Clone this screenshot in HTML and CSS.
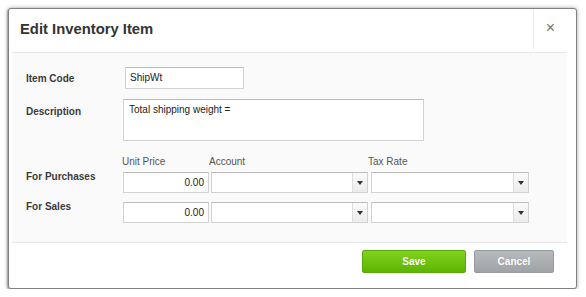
FILE: index.html
```html
<!DOCTYPE html>
<html>
<head>
<meta charset="utf-8">
<link rel="stylesheet" href="styles.css">
</head>
<body>
<div class="dialog">
  <div class="header">
    <h1 class="title">Edit Inventory Item</h1>
    <div class="close">×</div>
  </div>
  <div class="body">
    <div class="row row-code">
      <label class="lbl">Item Code</label>
      <div class="field code">ShipWt</div>
    </div>
    <div class="row row-desc">
      <label class="lbl">Description</label>
      <div class="field desc">Total shipping weight =</div>
    </div>
    <div class="row row-head">
      <div class="lbl"></div>
      <div class="colhead c-price">Unit Price</div>
      <div class="colhead c-acct">Account</div>
      <div class="colhead c-tax">Tax Rate</div>
    </div>
    <div class="row line">
      <div class="lbl">For Purchases</div>
      <div class="field num">0.00</div>
      <div class="select acct"><span class="arrow"></span></div>
      <div class="select tax"><span class="arrow"></span></div>
    </div>
    <div class="row line">
      <div class="lbl">For Sales</div>
      <div class="field num">0.00</div>
      <div class="select acct"><span class="arrow"></span></div>
      <div class="select tax"><span class="arrow"></span></div>
    </div>
  </div>
  <div class="footer">
    <button class="btn save">Save</button>
    <button class="btn cancel">Cancel</button>
  </div>
</div>
</body>
</html>
```
FILE: styles.css
```css
html, body { margin: 0; padding: 0; background: #fff; }
body { padding: 8px 0 0 8px; font-family: "Liberation Sans", Arial, sans-serif; }
.dialog {
  width: 569px;
  height: 281px;
  border: 1px solid #808080;
  border-radius: 3px;
  background: #fff;
  box-shadow: 0 0 4px rgba(0,0,0,0.35), -1px 1px 2px rgba(0,0,0,0.3);
  box-sizing: border-box;
  display: flex;
  flex-direction: column;
}
.header {
  height: 43px;
  display: flex;
  align-items: flex-start;
  flex-shrink: 0;
}
.title {
  flex: 1;
  margin: 0;
  padding: 12px 0 0 11px;
  font-size: 14.8px;
  font-weight: bold;
  color: #333;
}
.close {
  width: 43px;
  height: 40px;
  border-left: 1px solid #ececec;
  color: #777;
  font-size: 16px;
  line-height: 16px;
  padding: 11px 9px 0 0;
  text-align: center;
  box-sizing: border-box;
}
.body {
  margin: 0 9px 0 3px;
  background: #fafafa;
  border-top: 1px solid #e6e6e6;
  border-bottom: 1px solid #e6e6e6;
  height: 191px;
  padding: 14px 0 0 14px;
  box-sizing: border-box;
  flex-shrink: 0;
}
.lbl {
  width: 97px;
  flex-shrink: 0;
  font-size: 10px;
  line-height: 12px;
  font-weight: bold;
  color: #3a3a3a;
}
.row { display: flex; }
.field {
  background: #fff;
  border: 1px solid #d2d2d2;
  border-top-color: #bcbcbc;
  box-sizing: border-box;
  font-size: 10px;
  line-height: 12px;
  color: #222;
}
.row-code { align-items: center; height: 22px; }
.row-code .lbl { padding-top: 1px; }
.code { width: 119px; height: 22px; padding: 4px 4px; margin-left: 2px; }
.row-desc { margin-top: 10px; }
.row-desc .lbl { padding-top: 7px; }
.desc { width: 301px; height: 42px; padding: 4px 5px; }
.row-head { margin-top: 15px; height: 16px; }
.colhead { font-size: 10px; line-height: 12px; color: #555; margin-left: -1px; }
.c-price { width: 88px; }
.c-acct { width: 160px; }
.line { height: 21px; margin-bottom: 9px; }
.line .lbl { margin-top: -1px; }
.num { width: 86px; height: 21px; text-align: right; padding: 4px 4px 0 0; margin-right: 2px; }
.select {
  position: relative;
  background: #fff;
  border: 1px solid #d2d2d2;
  border-top-color: #bcbcbc;
  box-sizing: border-box;
  height: 21px;
}
.acct { width: 157px; margin-right: 3px; }
.tax { width: 158px; }
.arrow {
  position: absolute;
  right: 0; top: 0; bottom: 0;
  width: 14px;
  border-left: 1px solid #dedede;
  background: linear-gradient(#fafafa, #ececec);
}
.arrow::after {
  content: "";
  position: absolute;
  left: 4px; top: 8px;
  border-left: 3px solid transparent;
  border-right: 3px solid transparent;
  border-top: 4px solid #333;
}
.footer {
  flex: 1;
  display: flex;
  justify-content: flex-end;
  align-items: flex-start;
  padding: 7px 22px 0 0;
  gap: 8px;
}
.btn {
  height: 23px;
  margin: 0;
  border-radius: 2px;
  font-family: "Liberation Sans", Arial, sans-serif;
  font-size: 10px;
  font-weight: bold;
  color: #fff;
  text-shadow: 0 0 1px rgba(0,0,0,0.15);
}
.save {
  width: 104px;
  background: linear-gradient(#80d21c, #5db500);
  border: 1px solid #5aa90b;
}
.cancel {
  width: 80px;
  background: linear-gradient(#b7babd, #9fa3a7);
  border: 1px solid #979b9f;
}
```
